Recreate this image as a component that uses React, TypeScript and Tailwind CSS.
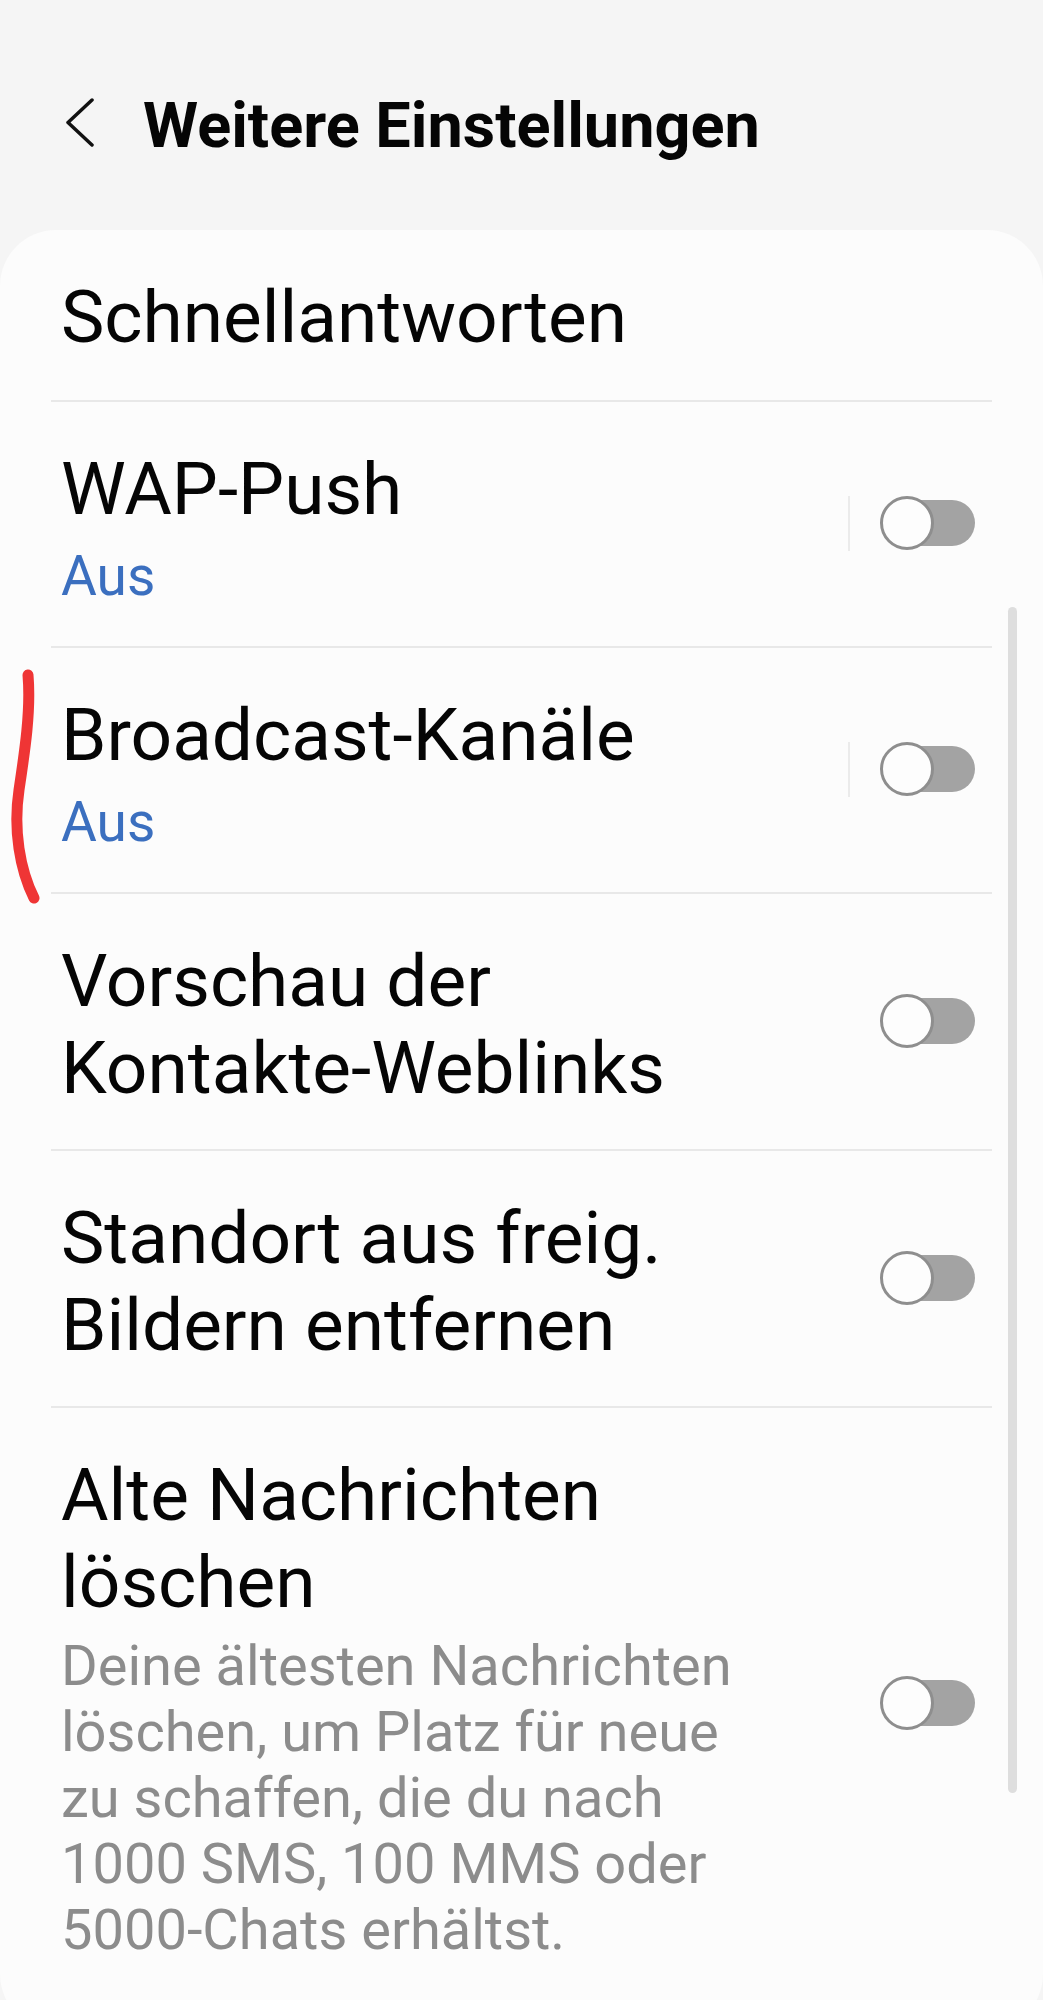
import React from "react";

function Toggle() {
  return (
    <div className="relative w-[95px] h-[54px] shrink-0 mb-[9px]">
      <div className="absolute right-0 top-[4px] h-[46px] w-[80px] rounded-full bg-[#a3a3a3]" />
      <div className="absolute left-0 top-0 w-[54px] h-[54px] rounded-full border-[3px] border-[#8e8e8e] bg-[#fdfdfd]" />
    </div>
  );
}

function Divider() {
  return <div className="h-[2px] mx-[51px] bg-[#e8e8e8]" />;
}

function Row({
  lines,
  sub,
  desc,
  toggle,
  sep,
  pb = "pb-[37px]",
}: {
  lines: string[];
  sub?: string;
  desc?: string[];
  toggle?: boolean;
  sep?: boolean;
  pb?: string;
}) {
  return (
    <div className={`flex items-center pl-[61px] pr-[68px] pt-[44px] ${pb}`}>
      <div className="flex-1 min-w-0">
        <div className="text-[73px] leading-[87px] text-[#050505]">
          {lines.map((l, i) => (
            <div key={i}>{l}</div>
          ))}
        </div>
        {sub && (
          <div className="mt-[10px] text-[55px] leading-[66px] text-[#3b6fbf]">{sub}</div>
        )}
        {desc && (
          <div className="mt-[7px] text-[56px] leading-[66px] text-[#8c8c8c]">
            {desc.map((l, i) => (
              <div key={i}>{l}</div>
            ))}
          </div>
        )}
      </div>
      {sep && <div className="w-[2px] h-[55px] bg-[#ebebeb] mr-[30px] mb-[9px]" />}
      {toggle && <Toggle />}
    </div>
  );
}

export default function App() {
  return (
    <div className="relative w-[1043px] h-[2000px] overflow-hidden bg-[#f5f5f5] font-['Roboto',sans-serif]">
      {/* Header */}
      <div className="h-[230px] pl-[64px] pt-[89px] flex items-start">
        <svg width="30" height="74" viewBox="0 0 30 74" className="shrink-0">
          <polyline
            points="28,11 4,33.5 28,56"
            fill="none"
            stroke="#111"
            strokeWidth="3.5"
            strokeLinecap="round"
            strokeLinejoin="round"
          />
        </svg>
        <div className="ml-[49px] text-[63px] leading-[74px] font-bold text-[#050505]">
          Weitere Einstellungen
        </div>
      </div>

      {/* Card */}
      <div className="bg-[#fcfcfc] rounded-[56px] min-h-[1800px]">
        <Row lines={["Schnellantworten"]} pb="pb-[39px]" />
        <Divider />
        <Row lines={["WAP-Push"]} sub="Aus" toggle sep />
        <Divider />
        <Row lines={["Broadcast-Kanäle"]} sub="Aus" toggle sep />
        <Divider />
        <Row lines={["Vorschau der", "Kontakte-Weblinks"]} toggle />
        <Divider />
        <Row lines={["Standort aus freig.", "Bildern entfernen"]} toggle />
        <Divider />
        <Row
          lines={["Alte Nachrichten", "löschen"]}
          desc={[
            "Deine ältesten Nachrichten",
            "löschen, um Platz für neue",
            "zu schaffen, die du nach",
            "1000 SMS, 100 MMS oder",
            "5000-Chats erhältst.",
          ]}
          toggle
        />
      </div>

      {/* Scrollbar overlay */}
      <div className="absolute left-[1008px] top-[607px] w-[9px] h-[1186px] rounded-full bg-[#dedede]" />

      {/* Red annotation stroke */}
      <svg
        className="absolute left-0 top-[660px]"
        width="60"
        height="260"
        viewBox="0 0 60 260"
      >
        <path
          d="M28 15 C31 50, 25 90, 19 130 S20 210, 34 238"
          fill="none"
          stroke="#ef3535"
          strokeWidth="11"
          strokeLinecap="round"
        />
      </svg>
    </div>
  );
}
